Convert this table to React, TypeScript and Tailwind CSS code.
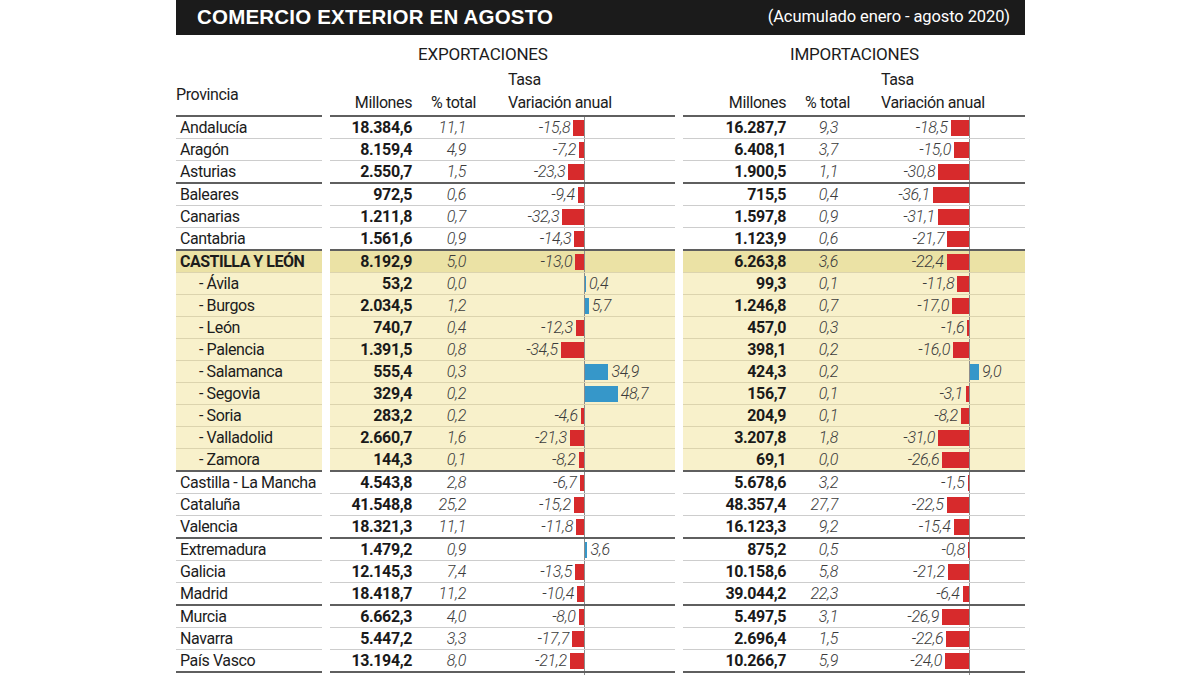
import React from 'react';

type Cell = [string, string, string];
type Row = { name: string; kind: 'normal' | 'cyl' | 'sub'; thick?: boolean; exp: Cell; imp: Cell };

const rows: Row[] = [
  { name: 'Andalucía', kind: 'normal', exp: ['18.384,6', '11,1', '-15,8'], imp: ['16.287,7', '9,3', '-18,5'] },
  { name: 'Aragón', kind: 'normal', exp: ['8.159,4', '4,9', '-7,2'], imp: ['6.408,1', '3,7', '-15,0'] },
  { name: 'Asturias', kind: 'normal', thick: true, exp: ['2.550,7', '1,5', '-23,3'], imp: ['1.900,5', '1,1', '-30,8'] },
  { name: 'Baleares', kind: 'normal', exp: ['972,5', '0,6', '-9,4'], imp: ['715,5', '0,4', '-36,1'] },
  { name: 'Canarias', kind: 'normal', exp: ['1.211,8', '0,7', '-32,3'], imp: ['1.597,8', '0,9', '-31,1'] },
  { name: 'Cantabria', kind: 'normal', thick: true, exp: ['1.561,6', '0,9', '-14,3'], imp: ['1.123,9', '0,6', '-21,7'] },
  { name: 'CASTILLA Y LEÓN', kind: 'cyl', exp: ['8.192,9', '5,0', '-13,0'], imp: ['6.263,8', '3,6', '-22,4'] },
  { name: '- Ávila', kind: 'sub', exp: ['53,2', '0,0', '0,4'], imp: ['99,3', '0,1', '-11,8'] },
  { name: '- Burgos', kind: 'sub', exp: ['2.034,5', '1,2', '5,7'], imp: ['1.246,8', '0,7', '-17,0'] },
  { name: '- León', kind: 'sub', exp: ['740,7', '0,4', '-12,3'], imp: ['457,0', '0,3', '-1,6'] },
  { name: '- Palencia', kind: 'sub', exp: ['1.391,5', '0,8', '-34,5'], imp: ['398,1', '0,2', '-16,0'] },
  { name: '- Salamanca', kind: 'sub', exp: ['555,4', '0,3', '34,9'], imp: ['424,3', '0,2', '9,0'] },
  { name: '- Segovia', kind: 'sub', exp: ['329,4', '0,2', '48,7'], imp: ['156,7', '0,1', '-3,1'] },
  { name: '- Soria', kind: 'sub', exp: ['283,2', '0,2', '-4,6'], imp: ['204,9', '0,1', '-8,2'] },
  { name: '- Valladolid', kind: 'sub', exp: ['2.660,7', '1,6', '-21,3'], imp: ['3.207,8', '1,8', '-31,0'] },
  { name: '- Zamora', kind: 'sub', thick: true, exp: ['144,3', '0,1', '-8,2'], imp: ['69,1', '0,0', '-26,6'] },
  { name: 'Castilla - La Mancha', kind: 'normal', exp: ['4.543,8', '2,8', '-6,7'], imp: ['5.678,6', '3,2', '-1,5'] },
  { name: 'Cataluña', kind: 'normal', exp: ['41.548,8', '25,2', '-15,2'], imp: ['48.357,4', '27,7', '-22,5'] },
  { name: 'Valencia', kind: 'normal', thick: true, exp: ['18.321,3', '11,1', '-11,8'], imp: ['16.123,3', '9,2', '-15,4'] },
  { name: 'Extremadura', kind: 'normal', exp: ['1.479,2', '0,9', '3,6'], imp: ['875,2', '0,5', '-0,8'] },
  { name: 'Galicia', kind: 'normal', exp: ['12.145,3', '7,4', '-13,5'], imp: ['10.158,6', '5,8', '-21,2'] },
  { name: 'Madrid', kind: 'normal', thick: true, exp: ['18.418,7', '11,2', '-10,4'], imp: ['39.044,2', '22,3', '-6,4'] },
  { name: 'Murcia', kind: 'normal', exp: ['6.662,3', '4,0', '-8,0'], imp: ['5.497,5', '3,1', '-26,9'] },
  { name: 'Navarra', kind: 'normal', exp: ['5.447,2', '3,3', '-17,7'], imp: ['2.696,4', '1,5', '-22,6'] },
  { name: 'País Vasco', kind: 'normal', thick: true, exp: ['13.194,2', '8,0', '-21,2'], imp: ['10.266,7', '5,9', '-24,0'] },
  { name: 'La Rioja', kind: 'normal', exp: ['1.126,6', '0,7', '-11,6'], imp: ['910,9', '0,5', '-10,0'] },
];

const toNum = (s: string) => parseFloat(s.replace(',', '.'));

function rowBg(kind: Row['kind']) {
  if (kind === 'cyl') return 'bg-[#ebe2a5]';
  if (kind === 'sub') return 'bg-[#f8f1cb]';
  return 'bg-white';
}

function rowBorder(row: Row) {
  if (row.thick) return 'h-[23px] border-b-2 border-[#5f5f5f]';
  return row.kind === 'normal' ? 'h-[22px] border-b border-[#cdcdcd]' : 'h-[22px] border-b border-[#dcd4ae]';
}

const Tasa = ({ value, scale, negClass }: { value: string; scale: number; negClass: string }) => {
  const v = toNum(value);
  const w = Math.max(1, Math.abs(v) * scale);
  return (
    <div className="flex h-full flex-1">
      <div className={`flex items-center justify-end ${negClass}`}>
        {v < 0 && (
          <>
            <span className="mr-[3px] text-[16px] font-light italic tracking-[-0.3px] text-[#3c3c3c]">{value}</span>
            <div className="h-[16px] bg-[#d72a2c]" style={{ width: w }} />
          </>
        )}
      </div>
      <div className="w-px bg-[#8c8c8c]" />
      <div className="flex flex-1 items-center">
        {v >= 0 && (
          <>
            <div className="h-[16px] bg-[#3697c9]" style={{ width: w }} />
            <span className="ml-[3px] text-[16px] font-light italic tracking-[-0.3px] text-[#3c3c3c]">{value}</span>
          </>
        )}
      </div>
    </div>
  );
};

export default function App() {
  return (
    <div
      className="h-[675px] w-[1200px] overflow-hidden bg-white pl-[176px] text-[#1c1c1c]"
      style={{ fontFamily: "Roboto, 'Liberation Sans', sans-serif" }}
    >
      <div className="w-[849px]">
        {/* title bar */}
        <div className="flex h-[35px] items-center justify-between bg-[#1b1b1b] pl-[21px] pr-[15px] text-white">
          <span className="text-[20.5px] font-bold tracking-[0.2px]" style={{ fontFamily: "'Liberation Sans', Arial, sans-serif" }}>
            COMERCIO EXTERIOR EN AGOSTO
          </span>
          <span className="text-[16.5px] leading-none tracking-[-0.1px]">(Acumulado enero - agosto 2020)</span>
        </div>

        {/* column headings */}
        <div className="flex text-[16px] leading-[18px] tracking-[-0.4px]">
          <div className="mr-[8px] h-[82px] w-[146px] border-b-2 border-[#5f5f5f] pt-[51px]">Provincia</div>
          <div className="mr-[8px] h-[82px] w-[345px] border-b-2 border-[#5f5f5f] pt-[9px]">
            <div className="pl-[88px] text-[17px] leading-[20px] tracking-[-0.2px]">EXPORTACIONES</div>
            <div className="mt-[7px] pl-[178px]">Tasa</div>
            <div className="mt-[5px] flex">
              <span className="w-[82px] text-right">Millones</span>
              <span className="w-[64px] text-right">% total</span>
              <span className="ml-[32px]">Variación anual</span>
            </div>
          </div>
          <div className="h-[82px] w-[342px] border-b-2 border-[#5f5f5f] pt-[9px]">
            <div className="pl-[107px] text-[17px] leading-[20px] tracking-[-0.2px]">IMPORTACIONES</div>
            <div className="mt-[7px] pl-[198px]">Tasa</div>
            <div className="mt-[5px] flex">
              <span className="w-[103px] text-right">Millones</span>
              <span className="w-[64px] text-right">% total</span>
              <span className="ml-[31px]">Variación anual</span>
            </div>
          </div>
        </div>

        {/* data rows */}
        {rows.map((row) => (
          <div key={row.name} className="flex text-[16px] leading-[21px]">
            <div
              className={`mr-[8px] flex w-[146px] items-center whitespace-nowrap ${rowBg(row.kind)} ${rowBorder(row)} ${
                row.kind === 'sub' ? 'pl-[23px]' : 'pl-[4px]'
              } ${row.kind === 'cyl' ? 'font-bold tracking-[-0.5px]' : 'tracking-[-0.4px]'}`}
            >
              {row.name}
            </div>
            <div className={`mr-[8px] flex w-[345px] ${rowBg(row.kind)} ${rowBorder(row)}`}>
              <span className="w-[82px] self-center text-right font-bold tracking-[-0.4px] text-[#1a1a1a]">{row.exp[0]}</span>
              <span className="w-[54px] self-center text-right font-light italic tracking-[-0.3px] text-[#3c3c3c]">{row.exp[1]}</span>
              <Tasa value={row.exp[2]} scale={0.67} negClass="w-[118px]" />
            </div>
            <div className={`flex w-[342px] ${rowBg(row.kind)} ${rowBorder(row)}`}>
              <span className="w-[103px] self-center text-right font-bold tracking-[-0.4px] text-[#1a1a1a]">{row.imp[0]}</span>
              <span className="w-[52px] self-center text-right font-light italic tracking-[-0.3px] text-[#3c3c3c]">{row.imp[1]}</span>
              <Tasa value={row.imp[2]} scale={1} negClass="w-[131px]" />
            </div>
          </div>
        ))}
      </div>
    </div>
  );
}
